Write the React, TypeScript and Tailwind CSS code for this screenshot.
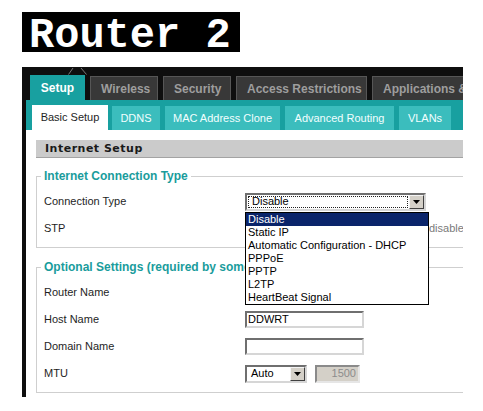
import React from 'react'

const mainTabs = [
  { label: 'Setup', width: 'w-[55px] h-[25px]', active: true },
  { label: 'Wireless', width: 'w-[68px] h-[24px] ml-[5px]', active: false },
  { label: 'Security', width: 'w-[68px] h-[24px] ml-[5px]', active: false },
  { label: 'Access Restrictions', width: 'w-[131px] h-[24px] ml-[5px]', active: false },
  { label: 'Applications & Gaming', width: 'w-[170px] h-[24px] ml-[5px]', active: false },
]

const subTabs = [
  { label: 'Basic Setup', width: 'w-[76px] h-[25px] ml-[6px]', active: true },
  { label: 'DDNS', width: 'w-[48px] h-[24px] ml-[4px]', active: false },
  { label: 'MAC Address Clone', width: 'w-[115px] h-[24px] ml-[5px]', active: false },
  { label: 'Advanced Routing', width: 'w-[109px] h-[24px] ml-[5px]', active: false },
  { label: 'VLANs', width: 'w-[52px] h-[24px] ml-[5px]', active: false },
]

const connectionTypes = [
  'Disable',
  'Static IP',
  'Automatic Configuration - DHCP',
  'PPPoE',
  'PPTP',
  'L2TP',
  'HeartBeat Signal',
]

// little classic windows arrow button
function ArrowButton() {
  return (
    <div className="flex h-full w-[15px] items-center justify-center border border-t-[#f4f4f4] border-l-[#f4f4f4] border-b-[#404040] border-r-[#404040] bg-[#d4d0c8]">
      <svg width="7" height="4" viewBox="0 0 7 4">
        <polygon points="0,0 7,0 3.5,4" fill="#000" />
      </svg>
    </div>
  )
}

function Row({ label, children }: { label: string; children?: React.ReactNode }) {
  return (
    <div className="flex h-[27px] items-center">
      <div className="w-[204px] shrink-0 pl-[3px] text-[11px] text-[#1e1e1e]">{label}</div>
      <div className="relative flex items-center">{children}</div>
    </div>
  )
}

export default function App() {
  return (
    <div className="min-h-[411px] bg-white pl-[22px] pt-[12px] font-['Liberation_Sans',Arial,sans-serif]">
      {/* Title */}
      <div className="h-[40px] w-[218px] whitespace-pre bg-black pl-[7px] pt-[8px] font-['Liberation_Mono','Courier_New',monospace] text-[42px] font-bold leading-[32px] text-white">
        Router 2
      </div>

      {/* Router page */}
      <div className="mt-[15px] flex h-[330px] w-[441px] flex-col overflow-hidden bg-[#0e0e0e]">
        <div className="h-[8px] shrink-0 pl-[46px]">
          <svg width="20" height="8" viewBox="0 0 20 8">
            <path d="M0.5 7.5 L5 1 M13 1 L18.5 7.5" stroke="#7a7a7a" strokeWidth="1" fill="none" />
          </svg>
        </div>

        {/* Main tabs */}
        <div className="flex h-[25px] shrink-0 items-end pl-[8px]">
          {mainTabs.map((tab) => (
            <div
              key={tab.label}
              className={
                tab.active
                  ? `${tab.width} flex shrink-0 items-center justify-center bg-[#18a0a0] pt-[1px] text-[12px] font-bold text-white`
                  : `${tab.width} flex shrink-0 items-center justify-start whitespace-nowrap border border-b-0 border-[#565656] bg-[#383838] pl-[10px] text-[12px] font-bold text-[#9e9e9e]`
              }
            >
              {tab.label}
            </div>
          ))}
        </div>

        {/* Sub tabs */}
        <div className="ml-[4px] flex h-[30px] shrink-0 items-end bg-[#18a0a0]">
          {subTabs.map((tab) => (
            <div
              key={tab.label}
              className={
                tab.active
                  ? `${tab.width} flex shrink-0 items-center justify-center bg-white text-[11px] text-[#1e1e1e]`
                  : `${tab.width} flex shrink-0 items-center justify-center bg-[#3bbdbd] text-[11px] text-[#f2ffff]`
              }
            >
              {tab.label}
            </div>
          ))}
        </div>

        {/* Content */}
        <div className="ml-[4px] flex-1 overflow-hidden bg-white pl-[10px] pt-[10px]">
          <div className="h-[18px] w-[440px] border-b border-[#a3a3a3] bg-[#cbcbcb] pl-[9px] font-['DejaVu_Sans',Verdana,sans-serif] text-[11px] font-bold leading-[17px] tracking-[0.5px] text-[#1a1a1a]">
            Internet Setup
          </div>

          <fieldset className="mt-[11px] w-[440px] border border-[#cfcfcf] pb-[5px] pl-[4px] pt-[5px]">
            <legend className="px-[3px] text-[12px] font-bold leading-[14px] text-[#1a9c9c]">
              Internet Connection Type
            </legend>
            <Row label="Connection Type">
              <div className="flex h-[18px] w-[181px] border-2 border-t-[#6f6f6f] border-l-[#6f6f6f] border-b-[#d6d6d6] border-r-[#d6d6d6] bg-white">
                <div className="m-[1px] flex flex-1 items-center border border-dotted border-[#222] pl-[3px] text-[11px] leading-none text-black">
                  Disable
                </div>
                <ArrowButton />
              </div>
              {/* open dropdown list */}
              <div className="absolute left-0 top-[19px] z-10 w-[184px] border border-black bg-white">
                {connectionTypes.map((t, i) => (
                  <div
                    key={t}
                    className={
                      i === 0
                        ? 'h-[13px] bg-[#0a246a] pl-[2px] text-[11px] leading-[13px] text-white'
                        : 'h-[13px] pl-[2px] text-[11px] leading-[13px] text-black'
                    }
                  >
                    {t}
                  </div>
                ))}
              </div>
            </Row>
            <Row label="STP">
              <span className="ml-[184px] text-[11px] text-[#7a7a7a]">disable</span>
            </Row>
          </fieldset>

          <fieldset className="mt-[12px] w-[440px] border border-[#cfcfcf] pb-[5px] pl-[4px] pt-[5px]">
            <legend className="px-[3px] text-[12px] font-bold leading-[14px] text-[#1a9c9c]">
              Optional Settings (required by some ISPs)
            </legend>
            <Row label="Router Name">
              <div className="h-[17px] w-[119px] border-2 border-t-[#6f6f6f] border-l-[#6f6f6f] border-b-[#d6d6d6] border-r-[#d6d6d6] bg-white" />
            </Row>
            <Row label="Host Name">
              <div className="flex h-[17px] w-[119px] items-center border-2 border-t-[#6f6f6f] border-l-[#6f6f6f] border-b-[#d6d6d6] border-r-[#d6d6d6] bg-white pl-[1px] text-[11px] text-black">
                DDWRT
              </div>
            </Row>
            <Row label="Domain Name">
              <div className="h-[17px] w-[119px] border-2 border-t-[#6f6f6f] border-l-[#6f6f6f] border-b-[#d6d6d6] border-r-[#d6d6d6] bg-white" />
            </Row>
            <Row label="MTU">
              <div className="flex h-[18px] w-[62px] border-2 border-t-[#6f6f6f] border-l-[#6f6f6f] border-b-[#d6d6d6] border-r-[#d6d6d6] bg-white">
                <div className="flex flex-1 items-center pl-[4px] text-[11px] text-black">Auto</div>
                <ArrowButton />
              </div>
              <div className="ml-[8px] flex h-[18px] w-[45px] items-center justify-end border-2 border-t-[#8a8a8a] border-l-[#8a8a8a] border-b-[#e6e6e6] border-r-[#e6e6e6] bg-[#d4d0c8] pr-[2px] text-[11px] text-[#8c8c8c]">
                1500
              </div>
            </Row>
          </fieldset>
        </div>
      </div>
    </div>
  )
}
